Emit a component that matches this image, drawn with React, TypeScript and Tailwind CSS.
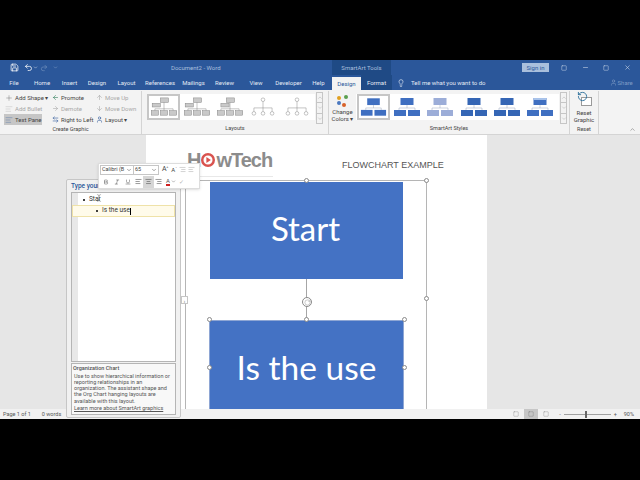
import { Undo2, Redo2, Save, Lightbulb, User, Minus, Square, X, ChevronDown, ChevronUp, ArrowLeft, ArrowRight, ArrowUp, ArrowDown, Plus, RotateCw, RotateCcw, Bold, Italic, Underline, AlignLeft, AlignCenter, AlignRight, ArrowLeftRight, TextCursor } from 'lucide-react';

const tabs = [
  { label: 'File', w: 'w-[28px]' },
  { label: 'Home', w: 'w-[28px]' },
  { label: 'Insert', w: 'w-[27px]' },
  { label: 'Design', w: 'w-[28px]' },
  { label: 'Layout', w: 'w-[31px]' },
  { label: 'References', w: 'w-[36px]' },
  { label: 'Mailings', w: 'w-[31px]' },
  { label: 'Review', w: 'w-[31px]' },
  { label: 'View', w: 'w-[32px]' },
  { label: 'Developer', w: 'w-[33px]' },
  { label: 'Help', w: 'w-[27px]' },
];

function RibbonAction({ icon, label, dim, active }: { icon: React.ReactNode; label: string; dim?: boolean; active?: boolean }) {
  return (
    <div className={`flex h-[11px] items-center gap-[2px] pl-[1px] whitespace-nowrap ${dim ? 'text-[#a8a8a8]' : 'text-[#444444]'} ${active ? 'bg-[#c6c6c6]' : ''}`}>
      <span className="flex w-[8px] justify-center">{icon}</span>
      <span>{label}</span>
    </div>
  );
}

function LayoutThumb({ variant, selected }: { variant: number; selected?: boolean }) {
  const outline = variant > 2;
  return (
    <div className={`flex h-[26px] w-[33px] items-center justify-center ${selected ? 'border-2 border-[#c6c6c6]' : ''}`}>
      <svg width="28" height="20" viewBox="0 0 30 22" fill="#c9c9c9" stroke="#7f7f7f" strokeWidth="0.5">
        {outline ? (
          <>
            <circle cx="15" cy="3" r="2" fill="none" />
            <path d="M15 5V12M5 12H25M5 12V16M15 12V16M25 12V16" fill="none" />
            <circle cx="5" cy="18" r="2" fill="none" />
            <circle cx="15" cy="18" r="2" fill="none" />
            <circle cx="25" cy="18" r="2" fill="none" />
          </>
        ) : (
          <>
            <rect x="11" y="1" width="9" height="5" />
            <rect x={variant === 2 ? 5 : 2} y="7" width="9" height="4" />
            <path d="M15 6V13M5 13H25M5 13V15M15 13V15M25 13V15" fill="none" />
            <rect x="1" y="15" width="8" height="5" />
            <rect x="11" y="15" width="8" height="5" />
            <rect x="21" y="15" width="8" height="5" />
          </>
        )}
      </svg>
    </div>
  );
}

function StyleThumb({ fill, selected, band }: { fill: string; selected?: boolean; band?: boolean }) {
  return (
    <div className={`flex h-[26px] w-[33px] shrink-0 items-center justify-center ${selected ? 'border-2 border-[#c6c6c6]' : ''}`}>
      <svg width="30" height="22" viewBox="0 0 30 22">
        <path d="M15 9V12M7 12H23M7 12V14M23 12V14" stroke="#9aa7bd" strokeWidth="0.5" fill="none" />
        <rect x="8.5" y="2" width="13" height="7" fill={fill} />
        <rect x="2" y="14" width="12" height="6" fill={fill} />
        <rect x="16" y="14" width="12" height="6" fill={fill} />
        {band && <rect x="8.5" y="2" width="13" height="2" fill="#a9c3ea" />}
      </svg>
    </div>
  );
}

function GalleryScroll() {
  return (
    <div className="flex h-[32px] w-[7px] flex-col border border-[#c6c6c6] text-[#666666]">
      <ChevronUp size={6} strokeWidth={1} className="flex-1" />
      <ChevronDown size={6} strokeWidth={1} className="flex-1 border-y border-[#c6c6c6]" />
      <ChevronDown size={6} strokeWidth={1} className="flex-1" />
    </div>
  );
}

function Handle({ className }: { className: string }) {
  return <div className={`absolute h-[5px] w-[5px] rounded-full border border-[#8a8a8a] bg-white ${className}`} />;
}

export default function App() {
  return (
    <div className="flex h-[480px] w-[640px] flex-col overflow-hidden bg-black text-[6px] font-['Roboto',sans-serif] text-[#444444]">
      <div className="h-[60px] shrink-0" />

      {/* title bar */}
      <div className="flex h-[15px] shrink-0 items-center bg-[#2b579a] text-[#b9cbe4]">
        <div className="flex w-[332px] items-center whitespace-nowrap">
          <Save size={9} className="ml-[10px] text-white" />
          <Undo2 size={9} className="ml-[5px] text-white" />
          <ChevronDown size={5} className="text-white" />
          <Redo2 size={8} className="ml-[2px] text-[#6f8fbd]" />
          <ChevronDown size={5} className="ml-[5px] text-[#9db5d6]" />
          <span className="ml-[113px] text-[#a9bfdc]">Document2 - Word</span>
        </div>
        <div className="flex h-full w-[59px] items-center justify-center whitespace-nowrap bg-[#1f4a85] text-[#a9bfdc]">SmartArt Tools</div>
        <div className="ml-[131px] flex h-[9px] w-[27px] items-center justify-center bg-[#a9bfdc] text-[#2b579a]">Sign in</div>
        <Square size={6} className="ml-[12px] text-[#c9d6e8]" />
        <Minus size={7} className="ml-[15px] text-[#c9d6e8]" />
        <Square size={6} className="ml-[14px] text-[#c9d6e8]" />
        <X size={7} className="ml-[15px] text-[#c9d6e8]" />
      </div>

      {/* tabs */}
      <div className="flex h-[15px] shrink-0 items-center whitespace-nowrap bg-[#2b579a] text-[#e3eaf4]">
        {tabs.map((t) => (
          <div key={t.label} className={`${t.w} flex justify-center`}>{t.label}</div>
        ))}
        <div className="mt-[2px] flex h-[13px] w-[29px] items-center justify-center bg-[#f3f3f3] text-[#2b579a]">Design</div>
        <div className="flex h-full w-[31px] items-center justify-center bg-[#1f4a85]">Format</div>
        <Lightbulb size={8} className="ml-[5px]" />
        <span className="ml-[6px]">Tell me what you want to do</span>
        <User size={7} className="ml-[124px] text-[#7f9cc6]" />
        <span className="ml-[1px] text-[#7f9cc6]">Share</span>
      </div>

      {/* ribbon */}
      <div className="relative flex h-[44px] shrink-0 bg-[#f3f3f3] pt-[1px]">
        <div className="flex w-[142px] flex-col border-r border-[#d4d4d4]">
          <div className="flex flex-1 pl-[4px] pt-[1px]">
            <div className="flex w-[38px] flex-col">
              <RibbonAction icon={<Plus size={8} strokeWidth={1} />} label="Add Shape  ▾" />
              <RibbonAction icon={<AlignLeft size={8} strokeWidth={1} />} label="Add Bullet" dim />
              <RibbonAction icon={<AlignLeft size={8} strokeWidth={1} className="text-[#2b579a]" />} label="Text Pane" active />
            </div>
            <div className="ml-[8px] flex w-[44px] flex-col">
              <RibbonAction icon={<ArrowLeft size={7} className="text-[#2f7d5a]" />} label="Promote" />
              <RibbonAction icon={<ArrowRight size={7} />} label="Demote" dim />
              <RibbonAction icon={<ArrowLeftRight size={7} className="text-[#2b579a]" />} label="Right to Left" />
            </div>
            <div className="flex flex-col">
              <RibbonAction icon={<ArrowUp size={7} />} label="Move Up" dim />
              <RibbonAction icon={<ArrowDown size={7} />} label="Move Down" dim />
              <RibbonAction icon={<User size={7} className="text-[#2b579a]" />} label="Layout ▾" />
            </div>
          </div>
          <div className="h-[10px] text-center text-[5.5px] leading-[8px]">Create Graphic</div>
        </div>

        <div className="flex w-[187px] flex-col border-r border-[#d4d4d4]">
          <div className="flex flex-1 items-start pl-[5px] pt-[3px]">
            <div className="flex h-[26px] w-[168px] justify-between bg-white pr-[2px]">
              <LayoutThumb variant={0} selected />
              <LayoutThumb variant={1} />
              <LayoutThumb variant={2} />
              <LayoutThumb variant={3} />
              <LayoutThumb variant={4} />
            </div>
            <div className="ml-[1px] mt-[-2px]"><GalleryScroll /></div>
          </div>
          <div className="h-[10px] text-center text-[5.5px] leading-[8px]">Layouts</div>
        </div>

        <div className="flex w-[241px] flex-col border-r border-[#d4d4d4]">
          <div className="flex flex-1 items-start pt-[3px]">
            <div className="flex w-[27px] shrink-0 flex-col items-center leading-[7px] whitespace-nowrap">
              <svg width="14" height="14" viewBox="0 0 14 14">
                <circle cx="3" cy="4" r="2" fill="#e0a020" />
                <circle cx="10" cy="3" r="2" fill="#5aa050" />
                <circle cx="3" cy="9" r="2" fill="#4a78c0" />
                <circle cx="8" cy="11" r="2" fill="#d8622a" />
              </svg>
              <span>Change</span>
              <span>Colors ▾</span>
            </div>
            <div className="flex h-[26px] w-[203px] justify-between bg-white pl-[1px] pr-[2px]">
              <StyleThumb fill="#3f6fc1" selected />
              <StyleThumb fill="#3f6fc1" />
              <StyleThumb fill="#9cadd8" />
              <StyleThumb fill="#3566b5" />
              <StyleThumb fill="#3566b5" />
              <StyleThumb fill="#3f6fc1" band />
            </div>
            <div className="ml-[1px] mt-[-2px]"><GalleryScroll /></div>
          </div>
          <div className="h-[10px] text-center text-[5.5px] leading-[8px]">SmartArt Styles</div>
        </div>

        <div className="flex w-[29px] flex-col items-center border-r border-[#d4d4d4] leading-[7px]">
          <div className="relative h-[16px] w-[15px]">
            <div className="absolute bottom-[1px] right-0 h-[9px] w-[11px] border border-[#9a9a9a] bg-white" />
            <RotateCcw size={11} strokeWidth={2} className="absolute left-0 top-0 text-[#2b6f9a]" />
          </div>
          <span className="mt-[2px]">Reset</span>
          <span>Graphic</span>
          <span className="mt-[3px] text-[5.5px]">Reset</span>
        </div>
        <ChevronUp size={7} className="absolute right-[4px] bottom-[1px] text-[#777777]" />
      </div>

      {/* document area */}
      <div className="relative z-10 flex h-[275px] shrink-0 border-t border-[#d4d4d4] bg-[#e6e6e6] pl-[146px]">
        <div className="h-full w-[341px] overflow-hidden bg-white">
          <div className="flex h-[45px] items-start">
            <div className="ml-[41px] mt-[14px] flex h-[28px] w-[86px] items-center whitespace-nowrap border-b border-[#e8e8e8] pb-[5px] text-[20px] font-bold leading-none tracking-[-1px] font-['Liberation_Sans',sans-serif] text-[#8c8c8c]">
              <span>H</span>
              <svg width="14" height="14" viewBox="0 0 17 17" className="mx-[1px] shrink-0">
                <circle cx="8.5" cy="8.5" r="7" fill="none" stroke="#d9534f" strokeWidth="3" />
                <path d="M6.5 5L12 8.5L6.5 12Z" fill="#d9534f" />
              </svg>
              <span>wTech</span>
            </div>
            <div className="ml-[69px] mt-[24px] whitespace-nowrap text-[9px] leading-[12px] font-['Liberation_Sans',sans-serif] text-[#555555]">FLOWCHART EXAMPLE</div>
          </div>

          <div className="relative ml-[39px] h-[300px] w-[242px] border border-[#b5b5b5] pl-[24px] pt-[1px]">
            <div className="flex h-[97px] w-[193px] items-center justify-center bg-[#4472c4] pb-[3px] pr-[2px] text-[33px] font-['Lato',sans-serif] text-white">Start</div>
            <div className="ml-[96px] h-[41px] w-px bg-[#a6a6a6]" />
            <div className="-ml-px flex h-[96px] w-[195px] items-center justify-center border border-[#8ea6d4] bg-[#4472c4] pb-[2px] text-[33.5px] font-['Lato',sans-serif] text-white">Is the use</div>

            <Handle className="left-[-3px] top-[-3px]" />
            <Handle className="left-[118px] top-[-3px]" />
            <Handle className="right-[-3px] top-[-3px]" />
            <Handle className="left-[-3px] top-[115px]" />
            <Handle className="right-[-3px] top-[115px]" />
            <Handle className="left-[21px] top-[136px]" />
            <Handle className="left-[118px] top-[136px]" />
            <Handle className="left-[216px] top-[136px]" />
            <Handle className="left-[21px] top-[184px]" />
            <Handle className="left-[216px] top-[184px]" />
            <div className="absolute left-[116px] top-[116px] flex h-[10px] w-[10px] items-center justify-center rounded-full border border-[#8a8a8a] bg-white">
              <RotateCw size={7} strokeWidth={1.5} className="text-[#8a8a8a]" />
            </div>
          </div>
        </div>

        {/* text pane */}
        <div className="absolute left-[66px] top-[44px] flex h-[239px] w-[115px] flex-col rounded-[2px] border border-[#c6c6c6] bg-[#f1f1f1] px-[4px]">
          <div className="h-[12px] pt-[1px] text-[6.5px] font-medium leading-[10px] whitespace-nowrap text-[#2b579a]">Type your text here</div>
          <div className="flex h-[170px] flex-col border border-[#b5b5b5] bg-[linear-gradient(to_right,#e8e8e8_6px,#ffffff_6px)] pt-[1px] text-[6.5px] whitespace-nowrap text-[#333333]">
            <div className="flex h-[11px] items-center pl-[11px]">
              <span className="h-[2px] w-[2px] rounded-full bg-black" />
              <span className="ml-[4px]">Star</span>
            </div>
            <div className="flex h-[12px] items-center border border-[#efe2a8] bg-[#fffbea] pl-[23px]">
              <span className="h-[2px] w-[2px] rounded-full bg-black" />
              <span className="ml-[4px]">Is the use</span>
              <span className="h-[7px] w-px bg-black" />
            </div>
          </div>
          <div className="mt-px flex h-[52px] flex-col border border-[#b5b5b5] bg-[#f8f8f8] px-[1px] pt-[1px] text-[5.5px] leading-[6.2px] whitespace-nowrap text-[#555555]">
            <div className="font-medium">Organization Chart</div>
            <p className="mt-[1.5px] pl-[1px]">
              Use to show hierarchical information or<br />
              reporting relationships in an<br />
              organization. The assistant shape and<br />
              the Org Chart hanging layouts are<br />
              available with this layout.
            </p>
            <div className="mt-[1px] pl-[1px] underline">Learn more about SmartArt graphics</div>
          </div>
          <div className="absolute right-[-8px] top-[116px] flex h-[8px] w-[7px] items-center justify-center border border-[#c6c6c6] bg-white text-[6px] text-[#777777]">›</div>
          <TextCursor size={8} strokeWidth={1} className="absolute left-[28px] top-[14px] text-[#333333]" />
        </div>

        {/* mini toolbar */}
        <div className="absolute left-[98px] top-[28px] flex h-[26px] w-[102px] flex-col justify-center gap-[1px] border border-[#dddddd] bg-white px-[1px] shadow-sm">
          <div className="flex h-[10px] items-center whitespace-nowrap">
            <div className="flex h-[10px] w-[34px] items-center justify-between border border-[#c6c6c6] px-[1px] text-[5.5px]">Calibri (B<ChevronDown size={6} /></div>
            <div className="flex h-[10px] w-[25px] items-center justify-between border-y border-r border-[#c6c6c6] px-[1px] text-[5.5px]">65<ChevronDown size={6} /></div>
            <span className="ml-[3px] text-[7px]">A<sup className="text-[4px]">^</sup></span>
            <span className="ml-[3px] text-[6px]">A<sup className="text-[4px]">ˇ</sup></span>
            <AlignRight size={7} className="ml-[2px] text-[#b5b5b5]" />
            <AlignLeft size={7} className="ml-[2px] text-[#b5b5b5]" />
          </div>
          <div className="flex h-[12px] items-center pl-[3px] text-[#555555]">
            <Bold size={6} />
            <Italic size={6} className="ml-[5px]" />
            <Underline size={6} className="ml-[5px]" />
            <AlignLeft size={7} className="ml-[4px]" />
            <div className="ml-[1px] flex h-[12px] w-[11px] items-center justify-center bg-[#d6d6d6]"><AlignCenter size={7} /></div>
            <AlignRight size={7} className="ml-[1px]" />
            <span className="ml-[4px] border-b-2 border-[#d02020] text-[6px] leading-[7px]">A</span>
            <ChevronDown size={5} className="ml-[1px]" />
            <span className="ml-[3px] text-[#b5b5b5]">✓</span>
          </div>
        </div>
      </div>

      {/* status bar */}
      <div className="flex h-[10px] shrink-0 items-center whitespace-nowrap bg-[#f1f1f1] pl-[3px] pr-[6px] text-[5.5px] text-[#555555]">
        <span>Page 1 of 1</span>
        <span className="ml-[11px]">0 words</span>
        <div className="ml-auto flex items-center">
          <Square size={6} strokeWidth={1} />
          <div className="ml-[5px] flex h-[10px] w-[14px] items-center justify-center bg-[#c6c6c6]"><Square size={6} strokeWidth={1} /></div>
          <Square size={6} strokeWidth={1} className="ml-[5px]" />
          <span className="ml-[10px]">-</span>
          <div className="relative ml-[3px] h-px w-[47px] bg-[#a0a0a0]">
            <div className="absolute left-[21px] top-[-3px] h-[7px] w-[2px] bg-[#666666]" />
          </div>
          <span className="ml-[3px]">+</span>
          <span className="ml-[7px]">90%</span>
        </div>
      </div>
    </div>
  );
}
